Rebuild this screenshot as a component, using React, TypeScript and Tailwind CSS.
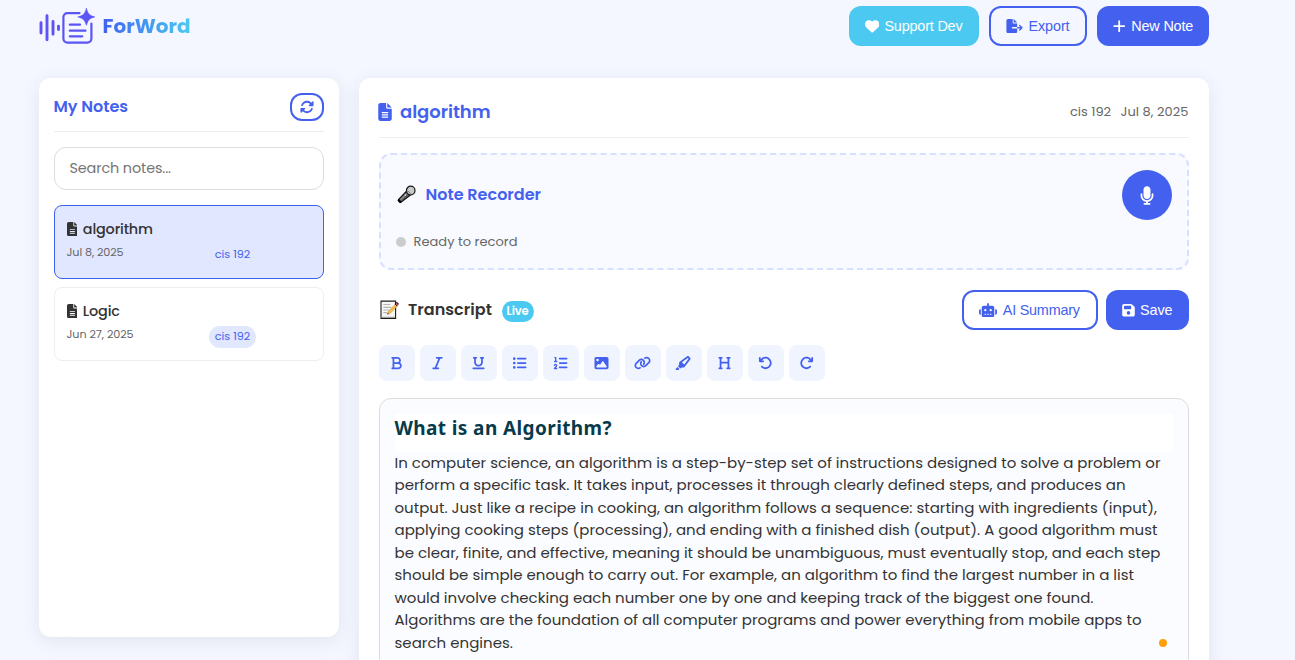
import { useLayoutEffect, useRef, useState } from "react";
import {
  FaHeart, FaFileExport, FaPlus, FaRotate, FaFileLines, FaMicrophone, FaRobot, FaFloppyDisk,
  FaBold, FaItalic, FaUnderline, FaListUl, FaListOl, FaImage, FaLink, FaHighlighter, FaHeading,
  FaArrowRotateLeft, FaArrowRotateRight,
} from "react-icons/fa6";

/** Text tracked so that it fills a fixed measure on a single line. */
function Fit({ text, width, className = "" }: { text: string; width: number; className?: string }) {
  const ref = useRef<HTMLSpanElement>(null);
  const [tracking, setTracking] = useState(0);
  useLayoutEffect(() => {
    const el = ref.current;
    if (!el) return;
    el.style.letterSpacing = "0px";
    const natural = el.getBoundingClientRect().width;
    const value = (width - natural) / text.length;
    el.style.letterSpacing = `${value}px`;
    setTracking(value);
  }, [text, width]);
  return (
    <span ref={ref} className={`inline-block whitespace-nowrap ${className}`} style={{ letterSpacing: tracking }}>
      {text}
    </span>
  );
}

function Logo() {
  return (
    <svg className="h-[38px] w-[56px]" viewBox="0 0 56 38" fill="none" stroke="#5b55f8" strokeWidth="2.9" strokeLinecap="round">
      <path d="M2 15.700v10.300M8 8.700v24M14 14.400v12.800M19.500 19.300v3.200" />
      <path d="M40.500 6.100H28.400a4 4 0 0 0-4 4v21.500a4 4 0 0 0 4 4h20a4 4 0 0 0 4-4V16.500" strokeWidth="2.2" />
      <path d="M30.800 17.700h10.200M30.800 23.700h15.700M30.800 29.300h12.500" strokeWidth="2.200" />
      <path d="M47.400 1.500c1.700 5.600 3.100 7 8.400 8.400-5.300 1.500-6.700 2.900-8.400 8.400-1.700-5.500-3.100-6.900-8.600-8.400 5.500-1.400 6.900-2.800 8.600-8.400z" fill="#5b55f8" stroke="#5b55f8" strokeWidth=".6" />
    </svg>
  );
}

function MicEmoji() {
  return (
    <svg className="h-5 w-5 shrink-0" viewBox="0 0 20 20">
      <path d="M10.300 6.400 2.600 14.300Q1.900 15.100 2.500 15.900l1 1.100q.8.800 1.700.1l9.200-7z" fill="#5c5c5c" stroke="#111" strokeWidth="1.200" strokeLinejoin="round" />
      <path d="m4.500 14.700 6.800-6.400" stroke="#8f8f8f" strokeWidth="1.200" />
      <path d="M2.300 14.700 5 17.600" stroke="#000" strokeWidth="1.800" />
      <circle cx="14.700" cy="5.500" r="4.300" fill="#c9c9c9" stroke="#161616" strokeWidth="1.200" />
      <path d="M10.800 5.800c2 .5 3.600 2 4 4.100" fill="none" stroke="#777" strokeWidth="1" />
      <circle cx="9.300" cy="10" r=".8" fill="#ddd" />
    </svg>
  );
}

function MemoEmoji() {
  return (
    <svg className="h-5 w-5 shrink-0" viewBox="0 0 20 20">
      <path d="M2 1.100h14.600v17.300H2z" fill="#f6f6f6" stroke="#1c1c1c" strokeWidth="1.100" />
      <path d="M2.500 17.300H16" stroke="#999" strokeWidth="1" />
      <path d="M4.300 4.500h7M4.300 7.300h8M4.300 10h6M4.300 12.700h4" stroke="#b5b5b5" strokeWidth="1.200" />
      <path d="m8.500 14.300 1-3 6.900-7 2 1.800-7.100 7.200z" fill="#f7bd45" stroke="#9a7428" strokeWidth=".4" />
      <path d="m15.900 4 1.300-1.200q.9-.6 1.700.2.800.9.100 1.600l-1.200 1.200z" fill="#e8505b" stroke="#111" strokeWidth=".9" />
      <path d="m8.300 14.500.5-1.500 1 1z" fill="#222" />
    </svg>
  );
}

const solid = "bg-[#4361ee] text-white";
const outline = "border-2 border-[#4361ee] text-[#4361ee]";
const button = "flex h-10 shrink-0 items-center justify-center rounded-xl font-['Liberation_Sans',sans-serif] text-[14.400px]";

function NoteCard({ title, date, active = false }: { title: string; date: string; active?: boolean }) {
  return (
    <div className={`h-[74px] rounded-lg border px-3 pt-3 ${active ? "border-[#4361ee] bg-[#e0e7ff]" : "border-[#eeeeee] bg-white"}`}>
      <div className="flex h-[22px] items-center gap-[5.500px] text-[#333333]">
        <FaFileLines className="h-[14.400px] w-[10.800px]" />
        <Fit text={title} width={active ? 70 : 37} className="pt-px text-[14.400px] font-medium" />
      </div>
      <div className="flex text-[11.200px]">
        <div className="w-[142.500px] pt-1 leading-[16px] text-[#666666]">
          <Fit text={date} width={active ? 57 : 67} />
        </div>
        <div className="mt-[4px] h-[22px] w-[47px] rounded-full bg-[#e0e7ff] text-center leading-[21px] text-[#4361ee]">
          <Fit text="cis 192" width={35.500} />
        </div>
      </div>
    </div>
  );
}

const tools = [FaBold, FaItalic, FaUnderline, FaListUl, FaListOl, FaImage, FaLink, FaHighlighter, FaHeading, FaArrowRotateLeft, FaArrowRotateRight];

const paragraph: [string, number][] = [
  ["In computer science, an algorithm is a step-by-step set of instructions designed to solve a problem or", 766],
  ["perform a specific task. It takes input, processes it through clearly defined steps, and produces an", 731],
  ["output. Just like a recipe in cooking, an algorithm follows a sequence: starting with ingredients (input),", 762.500],
  ["applying cooking steps (processing), and ending with a finished dish (output). A good algorithm must", 763],
  ["be clear, finite, and effective, meaning it should be unambiguous, must eventually stop, and each step", 766],
  ["should be simple enough to carry out. For example, an algorithm to find the largest number in a list", 739.500],
  ["would involve checking each number one by one and keeping track of the biggest one found.", 699],
  ["Algorithms are the foundation of all computer programs and power everything from mobile apps to", 747],
  ["search engines.", 118.500],
];

export default function App() {
  return (
    <div className="h-[660px] overflow-hidden bg-[#f4f7ff] pl-[38.500px] font-['Poppins','Inter',sans-serif] text-[#333333]">
      <div className="w-[1170px]">
        <header className="flex h-[78px] items-start justify-between pt-[6px]">
          <div className="flex h-10 items-center gap-2">
            <Logo />
            <Fit text="ForWord" width={88} className="bg-gradient-to-r from-[#4361ee] to-[#4cc9f0] bg-clip-text text-[20px] font-bold text-transparent" />
          </div>
          <div className="flex gap-2.5">
            <button className={`${button} w-[130px] gap-[5.500px] bg-[#4cc9f0] text-white`}>
              <FaHeart className="size-[14.400px]" />
              <Fit text="Support Dev" width={78} className="pt-px" />
            </button>
            <button className={`${button} ${outline} w-[98px] gap-[6px]`}>
              <FaFileExport className="h-[14.400px] w-[17px]" />
              <Fit text="Export" width={41} className="pt-px" />
            </button>
            <button className={`${button} ${solid} w-[112px] gap-[5px]`}>
              <FaPlus className="size-[14.400px]" />
              <Fit text="New Note" width={62} className="pt-px" />
            </button>
          </div>
        </header>

        <div className="flex items-start gap-5">
          <aside className="h-[559px] w-[300px] shrink-0 rounded-xl bg-white p-[15px] shadow-[0_4px_20px_rgba(0,0,0,0.08)]">
            <div className="flex h-[39px] items-start justify-between border-b border-[#eeeeee]">
              <h2 className="leading-[27px]"><Fit text="My Notes" width={74.500} className="text-[16px] font-semibold text-[#4361ee]" /></h2>
              <button className={`${outline} flex h-7 w-[34px] items-center justify-center rounded-xl`}>
                <FaRotate className="size-[14px]" />
              </button>
            </div>
            <div className="mt-[15px] flex h-[43px] items-center rounded-xl border border-[#dddddd] px-[15px] text-[14.400px] text-[#757575]">
              <Fit text="Search notes..." width={101.500} />
            </div>
            <div className="mt-[15px] flex flex-col gap-2">
              <NoteCard title="algorithm" date="Jul 8, 2025" active />
              <NoteCard title="Logic" date="Jun 27, 2025" />
            </div>
          </aside>

          <main className="h-[640px] w-[850px] shrink-0 rounded-xl bg-white px-5 pt-5 shadow-[0_4px_20px_rgba(0,0,0,0.08)]">
            <div className="flex h-10 items-start justify-between border-b border-[#eeeeee]">
              <h1 className="flex h-[27px] items-center gap-2 text-[#4361ee]">
                <FaFileLines className="-ml-[0.500px] h-[18px] w-[14px]" />
                <Fit text="algorithm" width={90.500} className="text-[18px] font-semibold" />
              </h1>
              <div className="flex h-[28px] items-center gap-[9.500px] text-[13px] text-[#666666]">
                <Fit text="cis 192" width={41} />
                <Fit text="Jul 8, 2025" width={68} />
              </div>
            </div>

            <section className="mt-[15px] h-[117px] rounded-xl border-2 border-dashed border-[#d6e0ff] bg-[#f8faff] p-[15px]">
              <div className="flex h-[50px] items-center justify-between">
                <div className="flex items-center gap-[10px]">
                  <MicEmoji />
                  <Fit text="Note Recorder" width={115.500} className="text-[16px] font-semibold text-[#4361ee]" />
                </div>
                <button className={`${solid} flex size-[50px] items-center justify-center rounded-full`}>
                  <FaMicrophone className="h-[19px] w-[14px]" />
                </button>
              </div>
              <div className="mt-3 flex h-5 items-center gap-2 text-[13px] text-[#666666]">
                <span className="size-2.5 rounded-full bg-[#cccccc]" />
                <Fit text="Ready to record" width={104} />
              </div>
            </section>

            <div className="mt-5 flex h-10 items-center justify-between">
              <div className="flex items-center gap-[9.500px]">
                <MemoEmoji />
                <Fit text="Transcript" width={84} className="text-[16px] font-semibold" />
                <span className="mt-[3px] h-[21px] w-8 rounded-full bg-[#4cc9f0] text-center text-[11.500px] leading-[21px] font-semibold text-white"><Fit text="Live" width={22} /></span>
              </div>
              <div className="flex gap-2">
                <button className={`${button} ${outline} w-[136px] gap-[5.500px]`}>
                  <FaRobot className="h-[14.400px] w-[18px]" />
                  <Fit text="AI Summary" width={77} className="pt-px" />
                </button>
                <button className={`${button} ${solid} w-[83px] gap-[5.500px]`}>
                  <FaFloppyDisk className="h-[14.400px] w-[13px]" />
                  <Fit text="Save" width={32.500} className="pt-px" />
                </button>
              </div>
            </div>

            <div className="mt-[15px] flex gap-[5px]">
              {tools.map((Icon, i) => (
                <button key={i} className="flex size-9 items-center justify-center rounded-lg bg-[#f0f4ff] text-[#4361ee]">
                  <Icon className="h-[14px] w-[17px]" />
                </button>
              ))}
            </div>

            <div className="relative mt-[17px] h-[400px] rounded-xl border border-[#dddddd] bg-[#fbfcff] px-[15px] pt-[15px]">
              <h2 className="h-[37.500px] bg-white leading-[28px] text-[#073b4c]">
                <Fit text="What is an Algorithm?" width={217.500} className="font-['Noto_Sans',sans-serif] text-[19px] font-bold" />
              </h2>
              <div className="text-[15px] leading-[22.500px]">
                {paragraph.map(([text, width]) => (
                  <div key={text} className="h-[22.500px]"><Fit text={text} width={width} /></div>
                ))}
              </div>
              <span className="absolute top-[240px] right-[21px] size-2 rounded-full bg-[#ff9f0a]" />
            </div>
          </main>
        </div>
      </div>
    </div>
  );
}
